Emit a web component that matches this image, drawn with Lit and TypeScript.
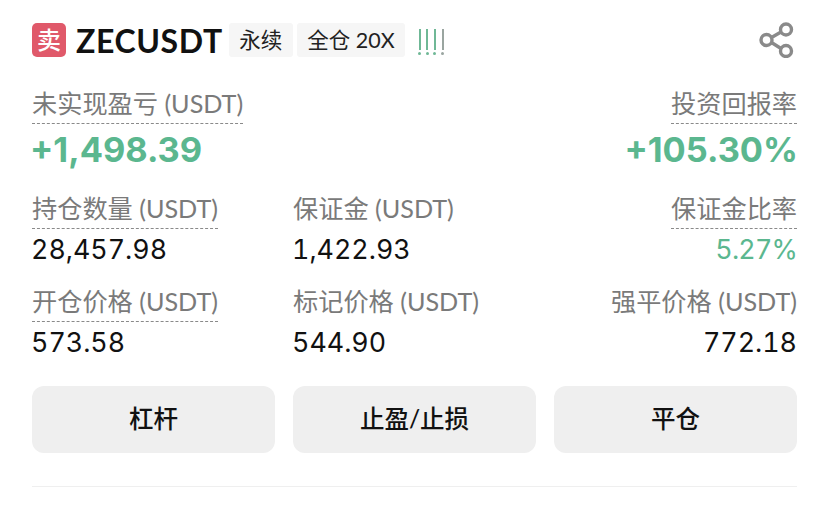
import { LitElement, html, css } from 'lit'
import { customElement } from 'lit/decorators.js'

@customElement('app-root')
export class AppRoot extends LitElement {
  static styles = css`
    :host {
      display: block;
      width: 829px;
      height: 507px;
      background: #fff;
      box-sizing: border-box;
      padding: 23px 32px 0;
      font-family: "Lato", "Noto Sans CJK SC", sans-serif;
      color: #111;
      overflow: hidden;
    }

    .head {
      display: flex;
      align-items: center;
      height: 34px;
    }

    .sell {
      width: 34px;
      height: 34px;
      border-radius: 5px;
      background: #e0596a;
      color: #fff;
      font-size: 24px;
      font-weight: 500;
      line-height: 34px;
      text-align: center;
      margin-right: 10px;
    }

    .symbol {
      font-size: 32px;
      font-weight: 700;
      margin-right: 6px;
      letter-spacing: 0.6px;
    }

    .tag {
      height: 34px;
      line-height: 34px;
      padding: 0 10.5px;
      margin-right: 4px;
      background: #f6f6f6;
      border-radius: 3px;
      font-size: 21.5px;
      color: #222;
    }

    .bars {
      display: flex;
      gap: 4.7px;
      margin-left: 9px;
      margin-top: 4px;
    }

    .bars span {
      width: 3px;
      height: 26px;
      display: flex;
      flex-direction: column;
      justify-content: space-between;
      align-items: center;
    }

    .bars i {
      width: 2px;
      height: 21px;
      background: #6fb896;
    }

    .bars b {
      width: 3px;
      height: 3px;
      border-radius: 50%;
      background: #6fb896;
    }

    .bars span:last-child i, .bars span:last-child b {
      background: #9aa5a0;
    }

    .share {
      margin-left: auto;
      margin-right: 2px;
      width: 36px;
      height: 36px;
    }

    .pnl {
      display: flex;
      justify-content: space-between;
      margin-top: 31px;
    }

    .field {
      display: flex;
      flex-direction: column;
      align-items: flex-start;
    }

    .right {
      align-items: flex-end;
    }

    .label {
      font-size: 25.2px;
      line-height: 30px;
      color: #7a7a7a;
      white-space: nowrap;
      padding-bottom: 5px;
      border-bottom: 1px dashed transparent;
    }

    .dotted {
      border-bottom-color: #8a8a8a;
    }

    .big {
      font-family: "Inter", sans-serif;
      font-size: 34.4px;
      font-weight: 700;
      line-height: 44px;
      margin: 4px 0 0 -2px;
      color: #5bb78f;
    }

    .right .big {
      margin-right: -1px;
    }

    .grid {
      display: grid;
      grid-template-columns: repeat(3, 243px);
      column-gap: 18px;
      row-gap: 19px;
      margin-top: 21px;
    }

    .value {
      font-family: "Inter", sans-serif;
      font-size: 26.8px;
      font-variant-numeric: tabular-nums;
      line-height: 36px;
      margin: 2px 0 0 -1px;
      color: #111;
    }

    .green {
      color: #5bb78f;
      letter-spacing: -0.8px;
    }

    .actions {
      display: grid;
      grid-template-columns: repeat(3, 243px);
      column-gap: 18px;
      margin-top: 26px;
    }

    .btn {
      height: 67px;
      line-height: 65px;
      border-radius: 12px;
      background: #efefef;
      text-align: center;
      font-size: 24.5px;
      font-weight: 500;
      color: #111;
    }

    .rule {
      height: 1px;
      background: #efefef;
      margin-top: 33px;
    }
  `

  private field (label: string, value: string, opts: { dotted?: boolean, right?: boolean, green?: boolean } = {}) {
    return html`
      <div class="field ${opts.right ? 'right' : ''}">
        <div class="label ${opts.dotted ? 'dotted' : ''}">${label}</div>
        <div class="value ${opts.green ? 'green' : ''}">${value}</div>
      </div>
    `
  }

  render () {
    return html`
      <div class="head">
        <div class="sell">卖</div>
        <div class="symbol">ZECUSDT</div>
        <div class="tag">永续</div>
        <div class="tag">全仓 20X</div>
        <div class="bars">
          <span><i></i><b></b></span>
          <span><i></i><b></b></span>
          <span><i></i><b></b></span>
          <span><i></i><b></b></span>
        </div>
        <svg class="share" viewBox="0 0 36 36" fill="none" stroke="#8a8a8a" stroke-width="3.4">
          <circle cx="7.5" cy="18" r="5.5"></circle>
          <circle cx="27" cy="7.5" r="5.5"></circle>
          <circle cx="27" cy="29" r="5.5"></circle>
          <path d="M12.5 15.5 22 10M12.5 20.5 22 26.5"></path>
        </svg>
      </div>

      <div class="pnl">
        <div class="field">
          <div class="label dotted">未实现盈亏 (USDT)</div>
          <div class="big">+1,498.39</div>
        </div>
        <div class="field right">
          <div class="label dotted">投资回报率</div>
          <div class="big">+105.30%</div>
        </div>
      </div>

      <div class="grid">
        ${this.field('持仓数量 (USDT)', '28,457.98', { dotted: true })}
        ${this.field('保证金 (USDT)', '1,422.93')}
        ${this.field('保证金比率', '5.27%', { dotted: true, right: true, green: true })}
        ${this.field('开仓价格 (USDT)', '573.58', { dotted: true })}
        ${this.field('标记价格 (USDT)', '544.90')}
        ${this.field('强平价格 (USDT)', '772.18', { right: true })}
      </div>

      <div class="actions">
        <div class="btn">杠杆</div>
        <div class="btn">止盈/止损</div>
        <div class="btn">平仓</div>
      </div>

      <div class="rule"></div>
    `
  }
}
